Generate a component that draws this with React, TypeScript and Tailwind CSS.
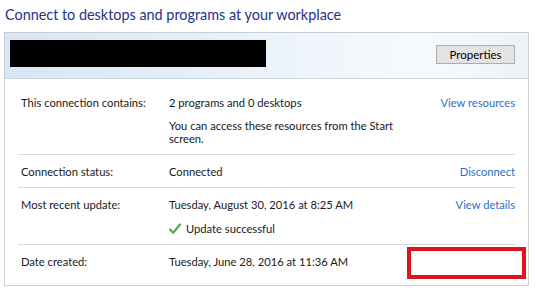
const font = { fontFamily: 'Lato, "Noto Sans", sans-serif' }

function Check() {
  return (
    <svg width="12" height="12" viewBox="0 0 12 12" aria-hidden>
      <path d="M1 6.5 L4.2 9.8 L11 1.5" fill="none" stroke="#4caf50" strokeWidth="2.2" strokeLinecap="round" strokeLinejoin="round" />
    </svg>
  )
}

function Row({ label, link, children, first, last }: { label: string; link?: string; children: React.ReactNode; first?: boolean; last?: boolean }) {
  return (
    <div
      className={`grid grid-cols-[151px_232px_1fr] ${first ? 'pt-[17px]' : 'pt-[10px]'} ${last ? 'pb-[17px]' : 'pb-[9px] border-b border-[#d9d9d9]'}`}
    >
      <div className="pl-[3px] text-[#1a1a1a]">{label}</div>
      <div className="text-[#1a1a1a]">{children}</div>
      <div className="text-right">
        {link && <a className="text-[#2a6fc7]">{link}</a>}
      </div>
    </div>
  )
}

export default function App() {
  return (
    <div className="relative h-[295px] w-[540px] overflow-hidden bg-white text-[11.2px] leading-[13px]" style={font}>
      <h1 className="h-[32px] pl-[5px] pt-[6px] text-[14.4px] leading-[18px] text-[#1e3287]">
        Connect to desktops and programs at your workplace
      </h1>

      <div className="ml-[4px] w-[525px] border border-[#c9ced6]">
        <div className="flex h-[46px] items-start justify-between border-b border-[#cdd5df] bg-gradient-to-r from-[#d7e6f5] via-[#f7fafd] via-80% to-[#eef2f7] pl-[5px] pr-[13px]">
          <div className="mt-[7px] h-[27px] w-[256px] bg-black" />
          <button className="mt-[12px] h-[19px] w-[79px] border border-[#adadad] bg-[#e3e3e3] text-[11.5px] leading-[17px] text-black">
            Properties
          </button>
        </div>

        <div className="mx-[13px]">
          <Row label="This connection contains:" link="View resources" first>
            <p>2 programs and 0 desktops</p>
            <p className="mt-[10px]">You can access these resources from the Start screen.</p>
          </Row>
          <Row label="Connection status:" link="Disconnect">
            <p>Connected</p>
          </Row>
          <Row label="Most recent update:" link="View details">
            <p>Tuesday, August 30, 2016 at 8:25 AM</p>
            <p className="mt-[11px] flex items-center gap-[5px]">
              <Check />
              <span>Update successful</span>
            </p>
          </Row>
          <Row label="Date created:" last>
            <p>Tuesday, June 28, 2016 at 11:36 AM</p>
          </Row>
        </div>
      </div>

      <div className="absolute left-[407px] top-[247px] h-[32px] w-[119px] border-[4px] border-[#e0141e]" />
    </div>
  )
}
